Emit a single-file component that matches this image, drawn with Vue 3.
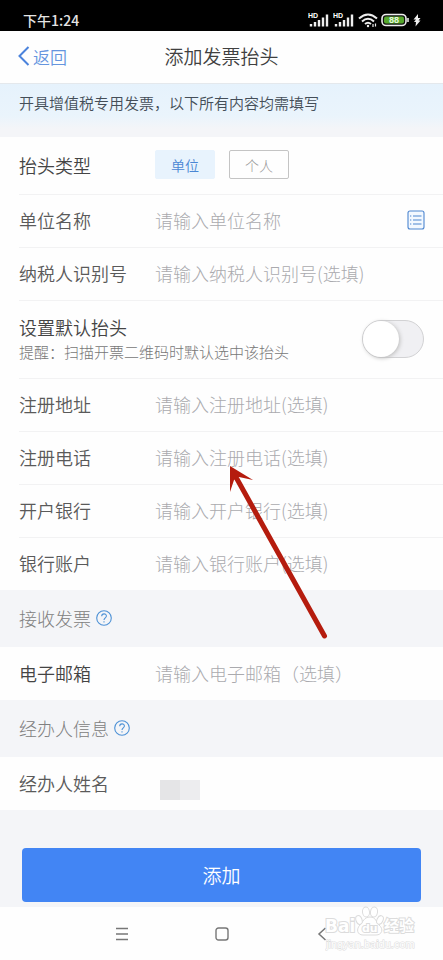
<script setup>
import { reactive, ref } from 'vue'

const titleType = ref('company')
const isDefault = ref(false)
const form = reactive({ name: '', taxId: '', address: '', phone: '', bank: '', account: '', email: '' })

const nameFields = [
  { key: 'name', label: '单位名称', hint: '请输入单位名称', picker: true },
  { key: 'taxId', label: '纳税人识别号', hint: '请输入纳税人识别号(选填)' },
]
const companyFields = [
  { key: 'address', label: '注册地址', hint: '请输入注册地址(选填)' },
  { key: 'phone', label: '注册电话', hint: '请输入注册电话(选填)' },
  { key: 'bank', label: '开户银行', hint: '请输入开户银行(选填)' },
  { key: 'account', label: '银行账户', hint: '请输入银行账户(选填)' },
]
</script>

<template>
  <div class="screen">
    <div class="status">
      <span class="clock">下午1:24</span>
      <div class="indicators">
        <svg v-for="n in 2" :key="n" class="signal" width="22" height="16" viewBox="0 0 22 16">
          <text x="0" y="6" font-size="7" font-weight="700" fill="#fff">HD</text>
          <path d="M3 14.500v-2.500M7 14.500V10M11 14.500V8M15 14.500V5.500M19 14.500V2.500" stroke="#eee" stroke-width="2.400" />
        </svg>
        <svg class="wifi" width="20" height="16" viewBox="0 0 20 16" fill="none" stroke="#eee" stroke-width="2">
          <path d="M1 6.500Q10-1.500 19 6.500M4 9.500Q10 4 16 9.500M7 12Q10 9.500 13 12" />
          <circle cx="10" cy="14" r="1.200" fill="#eee" stroke="none" />
          <path d="M15 12v3M17.500 11.500v3" stroke-width="1.200" />
        </svg>
        <svg class="battery" width="29" height="14" viewBox="0 0 29 14">
          <rect x="1" y="1.500" width="24" height="11" rx="4" fill="#111" stroke="#eee" stroke-width="1.600" />
          <rect x="3" y="3.500" width="20" height="7" rx="2" fill="#55a72c" />
          <path d="M27 5v4" stroke="#ccc" stroke-width="1.800" />
          <text x="13" y="10.200" text-anchor="middle" font-size="9" font-weight="700" fill="#e8f8df">88</text>
        </svg>
        <svg class="bolt" width="8" height="14" viewBox="0 0 8 14">
          <path d="M5 1L0.500 6.500h2.500L1 9h2L2.500 13.500L7.500 7.500H5.500L7.500 5H5z" fill="#eee" />
        </svg>
      </div>
    </div>

    <header class="header">
      <a class="back" href="#">
        <svg width="12" height="20" viewBox="0 0 12 20" fill="none" stroke="#4b83dc" stroke-width="2">
          <path d="M10.500 1L1.500 10l9 9" />
        </svg>返回
      </a>
      <h1>添加发票抬头</h1>
    </header>

    <p class="notice">开具增值税专用发票，以下所有内容均需填写</p>

    <form class="form" @submit.prevent>
      <div class="group">
        <div class="row type-row">
          <span class="label strong">抬头类型</span>
          <div class="chips">
            <button type="button" :class="['chip', { on: titleType === 'company' }]" @click="titleType = 'company'">单位</button>
            <button type="button" :class="['chip', { on: titleType === 'person' }]" @click="titleType = 'person'">个人</button>
          </div>
        </div>
        <div v-for="f in nameFields" :key="f.key" class="row">
          <label class="label" :for="f.key">{{ f.label }}</label>
          <input :id="f.key" v-model="form[f.key]" class="field" type="text" :placeholder="f.hint" />
          <button v-if="f.picker" type="button" class="picker" aria-label="选择单位">
            <svg width="18" height="20" viewBox="0 0 18 20" fill="none" stroke="#4d86d0">
              <rect x="1" y="1" width="16" height="18" rx="2" fill="#f2f8ff" stroke-width="1.100" />
              <path d="M6 6h8.500M6 10h8.500M6 14h8.500" stroke-width="1.200" />
              <path d="M3 6h1.300M3 10h1.300M3 14h1.300" stroke-width="1.200" />
            </svg>
          </button>
        </div>
        <div class="row default-row">
          <label class="default-text" for="default">
            <span class="label strong">设置默认抬头</span>
            <span class="tip">提醒：扫描开票二维码时默认选中该抬头</span>
          </label>
          <input id="default" v-model="isDefault" class="switch" type="checkbox" />
        </div>
        <div v-for="f in companyFields" :key="f.key" class="row">
          <label class="label" :for="f.key">{{ f.label }}</label>
          <input :id="f.key" v-model="form[f.key]" class="field" type="text" :placeholder="f.hint" />
        </div>
      </div>

      <h2 class="section">
        接收发票
        <button type="button" class="help" aria-label="接收发票说明">
          <svg width="16" height="16" viewBox="0 0 16 16" fill="none" stroke="#4d91d6" stroke-width="1.100">
            <circle cx="8" cy="8" r="7.300" />
            <path d="M5.700 6.300C5.700 3.100 10.400 3.200 10.400 6c0 1.800-2.400 1.900-2.400 4M8 11.300v1.300" />
          </svg>
        </button>
      </h2>
      <div class="group">
        <div class="row">
          <label class="label strong" for="email">电子邮箱</label>
          <input id="email" v-model="form.email" class="field" type="email" placeholder="请输入电子邮箱（选填）" />
        </div>
      </div>

      <h2 class="section">
        经办人信息
        <button type="button" class="help" aria-label="经办人信息说明">
          <svg width="16" height="16" viewBox="0 0 16 16" fill="none" stroke="#4d91d6" stroke-width="1.100">
            <circle cx="8" cy="8" r="7.300" />
            <path d="M5.700 6.300C5.700 3.100 10.400 3.200 10.400 6c0 1.800-2.400 1.900-2.400 4M8 11.300v1.300" />
          </svg>
        </button>
      </h2>
      <div class="group">
        <div class="row">
          <span class="label">经办人姓名</span>
          <span class="mosaic"><i></i><i></i></span>
        </div>
      </div>

      <div class="actions">
        <button type="submit" class="submit">添加</button>
      </div>
    </form>

    <nav class="keys">
      <button type="button" aria-label="菜单">
        <svg width="14" height="14" viewBox="0 0 14 14" stroke="#777" stroke-width="1.300"><path d="M1 1.500h12M1 7h12M1 12.500h12" /></svg>
      </button>
      <button type="button" aria-label="主页">
        <svg width="14" height="14" viewBox="0 0 14 14" fill="none" stroke="#777" stroke-width="1.400"><rect x="1" y="1" width="12" height="12" rx="2.500" /></svg>
      </button>
      <button type="button" aria-label="返回">
        <svg width="14" height="14" viewBox="0 0 14 14" fill="none" stroke="#777" stroke-width="1.500"><path d="M10.500 1L4 7l6.500 6" /></svg>
      </button>
      <svg class="watermark" width="92" height="46" viewBox="0 0 92 46">
        <g fill="#fff" stroke="#dcdcdc" stroke-width="1">
          <path d="M45 12c6 0 6 5 9 8 5 4 3 10-3 10H38c-6 0-7-6-3-10 3-3 4-8 10-8z" />
          <ellipse cx="34" cy="15" rx="3" ry="4.500" transform="rotate(-20 34 15)" />
          <ellipse cx="41" cy="7" rx="3.500" ry="5" transform="rotate(-5 41 7)" />
          <ellipse cx="49" cy="7" rx="3.500" ry="5" transform="rotate(8 49 7)" />
          <ellipse cx="55" cy="15" rx="3" ry="4.500" transform="rotate(25 55 15)" />
        </g>
        <g class="mark">
          <text class="latin" x="0" y="27" font-size="17">Bai</text>
          <text class="latin" x="37" y="27" font-size="11">du</text>
          <text x="59" y="26" font-size="15">经验</text>
          <text class="site" x="1" y="43" font-size="11">jingyan.baidu.com</text>
        </g>
      </svg>
    </nav>

    <svg class="pointer" width="100" height="176" viewBox="0 0 100 176">
      <path d="M95.500 171L8 14" stroke="#b51c0e" stroke-width="5" stroke-linecap="round" />
      <path d="M1 1L24 15L10 12L5 15L1 27z" fill="#b51c0e" />
    </svg>
  </div>
</template>

<style>
body {
  margin: 0;
  background: #fefefe;
}
</style>

<style scoped>
* {
  box-sizing: border-box;
}
.screen {
  position: relative;
  overflow: hidden;
  font-family: "Noto Sans CJK SC", sans-serif;
  font-size: 18px;
  font-weight: 300;
  color: #444;
  background: #fefefe;
}
button,
input {
  margin: 0;
  padding: 0;
  border: 0;
  background: none;
  font: inherit;
  color: inherit;
}
svg {
  display: block;
}
.status {
  display: flex;
  justify-content: space-between;
  align-items: center;
  height: 31px;
  padding: 8px 22px 0 23px;
  background: #000;
  color: #e4e4e4;
}
.clock {
  font-size: 14px;
  line-height: 20px;
  font-weight: 500;
}
.indicators {
  display: flex;
  align-items: center;
  gap: 3px;
}
.indicators text {
  font-family: "Liberation Sans", sans-serif;
}
.header {
  display: grid;
  grid-template-columns: 1fr auto 1fr;
  align-items: center;
  height: 52px;
  padding: 0 18px 2px;
}
.back {
  display: flex;
  align-items: center;
  gap: 3px;
  font-size: 17px;
  font-weight: 350;
  color: #6595de;
  text-decoration: none;
}
h1 {
  margin: 0;
  font-size: 19px;
  line-height: 28px;
  font-weight: 350;
  color: #404040;
}
.notice {
  margin: 0;
  height: 54px;
  padding: 8px 19px;
  border-top: 1px solid #e4e8ec;
  background: linear-gradient(#e6f2fc, #eaf4fc 60%, #f4f5f8 85%);
  font-size: 15px;
  line-height: 22px;
  font-weight: 350;
  color: #444e58;
  white-space: nowrap;
}
.form {
  background: #f4f5f8;
}
.group {
  padding-left: 19px;
  background: #fefefe;
}
.row {
  display: flex;
  align-items: center;
  height: 53px;
  padding: 0 19px 2px 0;
}
.row + .row {
  border-top: 1px solid #f2f2f3;
}
.type-row {
  height: 57px;
}
.label {
  flex: none;
  width: 136px;
  line-height: 26px;
  font-weight: 350;
  color: #5a5a5a;
}
.strong {
  color: #444;
}
.chips {
  display: flex;
  gap: 14px;
}
.chip {
  width: 60px;
  height: 29px;
  border: 1px solid #c4c4c4;
  border-radius: 2px;
  font-size: 14px;
  line-height: 20px;
  color: #999;
}
.chip.on {
  border-color: #e8f3fd;
  background: #e8f3fd;
  color: #4b87d4;
  font-weight: 350;
}
.field {
  flex: 1;
  min-width: 0;
  height: 28px;
  outline: none;
}
.field::placeholder {
  color: #aaaaae;
  opacity: 1;
}
.picker {
  flex: none;
  margin-right: -1px;
}
.default-row {
  height: 78px;
}
.default-text {
  display: flex;
  flex: 1;
  flex-direction: column;
  min-width: 0;
}
.default-text .label {
  width: auto;
}
.tip {
  font-size: 15px;
  line-height: 24px;
  color: #777;
  white-space: nowrap;
}
.switch {
  appearance: none;
  flex: none;
  width: 62px;
  height: 38px;
  border: 1px solid #d2d2d4;
  border-radius: 19px;
  background: #f0f0f3;
}
.switch::before {
  content: "";
  display: block;
  width: 36px;
  height: 36px;
  border-radius: 50%;
  background: #fff;
  box-shadow: 1px 1px 4px #bbb;
}
.switch:checked {
  background: #4285f4;
}
.switch:checked::before {
  margin-left: auto;
}
.section {
  display: flex;
  align-items: center;
  gap: 5px;
  height: 57px;
  margin: 0;
  padding: 0 19px 1px;
  font-size: 18px;
  font-weight: 300;
  color: #808080;
}
.mosaic {
  display: flex;
  margin: 15px 0 0 5px;
}
.mosaic i {
  width: 20px;
  height: 20px;
  background: #e5e5e7;
}
.mosaic i + i {
  background: #ededef;
}
.actions {
  padding: 38px 22px 5px;
}
.submit {
  display: block;
  width: 100%;
  height: 54px;
  padding-bottom: 2px;
  border-radius: 4px;
  background: #4285f4;
  font-size: 19px;
  font-weight: 350;
  color: #fff;
}
.keys {
  position: relative;
  display: flex;
  justify-content: center;
  align-items: center;
  gap: 86px;
  height: 53px;
}
.watermark {
  position: absolute;
  right: 26px;
  top: -2px;
}
.mark {
  font-family: "Liberation Sans", "Noto Sans CJK SC", sans-serif;
  font-weight: 700;
  fill: #fff;
  stroke: #dcdcdc;
  stroke-width: 2px;
  paint-order: stroke;
}
.latin {
  font-family: "DejaVu Sans", sans-serif;
}
.site {
  font-weight: 400;
  stroke-width: 1px;
}
.pointer {
  position: absolute;
  left: 229px;
  top: 465px;
  pointer-events: none;
}
</style>
